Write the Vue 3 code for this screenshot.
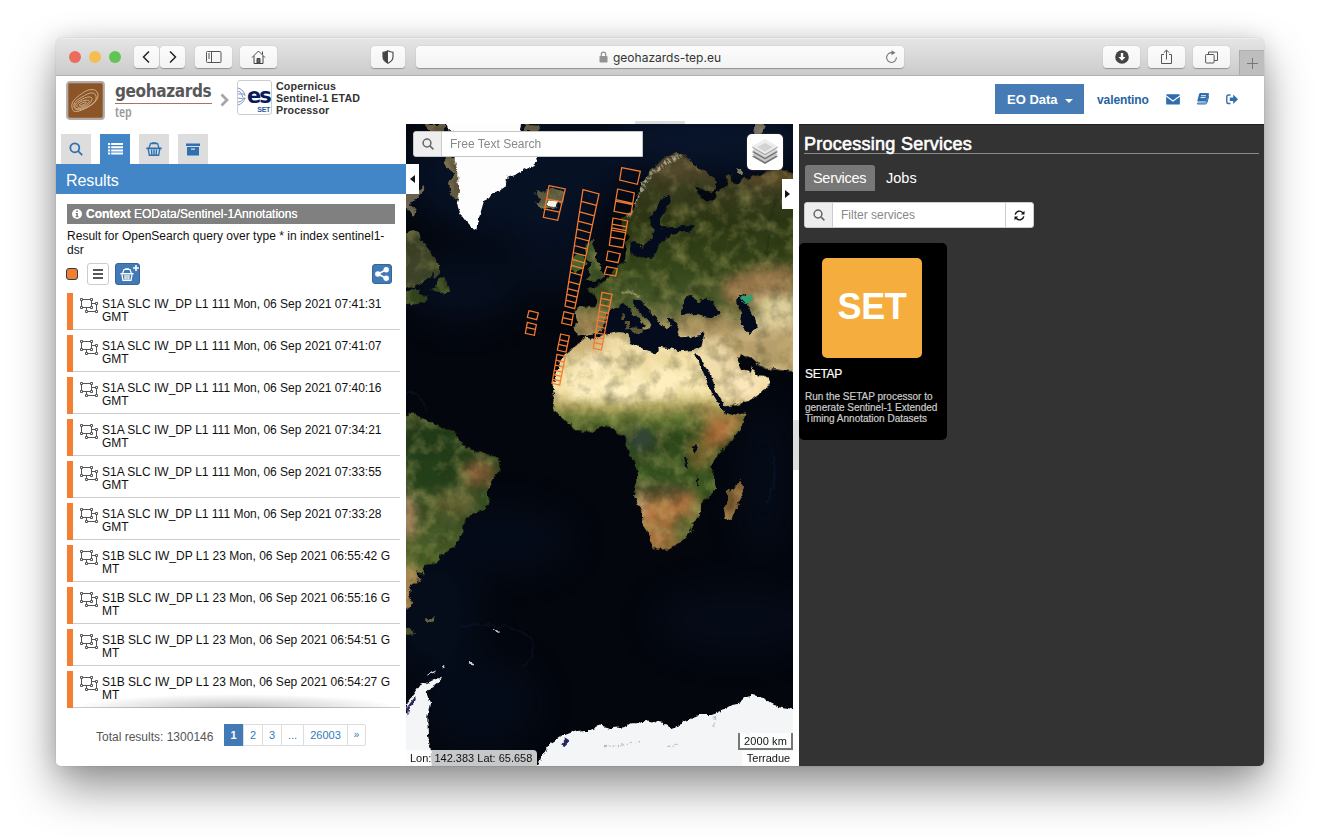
<script setup>
const results = [
  ['S1A', '111', '07:41:31', false],
  ['S1A', '111', '07:41:07', false],
  ['S1A', '111', '07:40:16', false],
  ['S1A', '111', '07:34:21', false],
  ['S1A', '111', '07:33:55', false],
  ['S1A', '111', '07:33:28', false],
  ['S1B', '23', '06:55:42', true],
  ['S1B', '23', '06:55:16', true],
  ['S1B', '23', '06:54:51', true],
  ['S1B', '23', '06:54:27', true],
].map(([sat, track, time, split]) => ({
  first: `${sat} SLC IW_DP L1 ${track} Mon, 06 Sep 2021 ${time}` + (split ? ' G' : ''),
  second: split ? 'MT' : 'GMT',
}))

const pages = ['1', '2', '3', '...', '26003', '»']

// Acquisition strips: top-left, top-right, bottom-left, bottom-right, then rung positions
const strips = [
  [435, 197, 484, 207, 418, 292, 461, 301, [0.42, 0.74]],
  [537, 209, 585, 222, 483, 558, 512, 566, [0.1, 0.19, 0.27, 0.34, 0.41, 0.48, 0.54, 0.6, 0.65, 0.71, 0.79, 0.85, 0.9, 0.95]],
  [480, 575, 508, 582, 473, 609, 502, 616, [0.52]],
  [470, 642, 496, 648, 460, 690, 486, 696, [0.35, 0.65]],
  [459, 703, 484, 709, 444, 790, 467, 795, [0.2, 0.37, 0.55, 0.7, 0.86]],
  [375, 572, 403, 579, 370, 592, 398, 599, []],
  [370, 607, 397, 614, 364, 640, 391, 646, [0.45]],
  [653, 143, 709, 154, 647, 180, 700, 193, []],
  [641, 207, 691, 219, 630, 274, 681, 284, [0.48, 0.54]],
  [627, 294, 671, 303, 616, 376, 657, 383, [0.22, 0.36, 0.44, 0.7]],
  [612, 393, 649, 402, 607, 421, 642, 428, []],
  [608, 440, 640, 446, 601, 462, 635, 468, []],
  [594, 517, 624, 523, 568, 685, 592, 690, [0.11, 0.22, 0.34, 0.43, 0.5, 0.61, 0.72, 0.8, 0.9]],
].map(([ax, ay, bx, by, cx, cy, dx, dy, rungs]) => {
  let d = `M${ax} ${ay}L${bx} ${by}L${dx} ${dy}L${cx} ${cy}Z`
  for (const t of rungs) {
    d += `M${ax + (cx - ax) * t} ${ay + (cy - ay) * t}L${bx + (dx - bx) * t} ${by + (dy - by) * t}`
  }
  return d
})
</script>

<template>
  <div class="desktop">
    <div class="window">
      <div class="toolbar">
        <div class="lights"><i class="red"></i><i class="yellow"></i><i class="green"></i></div>
        <div class="tb nav">
          <svg width="25" height="22" viewBox="0 0 25 22"><path d="M15 5.500L9.500 11l5.500 5.500" fill="none" stroke="#222" stroke-width="1.500" /></svg>
        </div>
        <div class="tb nav fwd">
          <svg width="25" height="22" viewBox="0 0 25 22"><path d="M10 5.500l5.500 5.500-5.500 5.500" fill="none" stroke="#222" stroke-width="1.500" /></svg>
        </div>
        <div class="tb side">
          <svg width="16" height="12" viewBox="0 0 16 12" fill="none" stroke="#555"><rect x=".5" y=".5" width="14.500" height="11" rx="1" /><path d="M5.500 .5v11M2 3h2M2 5h2M2 7h2" /></svg>
        </div>
        <div class="tb home">
          <svg width="15" height="14" viewBox="0 0 15 14" fill="none" stroke="#444"><path d="M1 7.500l6.500-6.500L14 7.500M3 6v7.500h9V6M11.500 4.500V1.500" /><path d="M6 13V8.500h3V13z" fill="#666" /></svg>
        </div>
        <div class="tb shield">
          <svg width="12" height="14" viewBox="0 0 12 14"><path d="M6 .7C4.500 1.800 2.500 2.100 1 2.200V7c0 3 2.500 5 5 6.300C8.500 12 11 10 11 7V2.200C9.500 2.100 7.500 1.800 6 .7z" fill="none" stroke="#444" stroke-width="1.100" /><path d="M6 .7C4.500 1.800 2.500 2.100 1 2.200V7c0 3 2.500 5 5 6.300z" fill="#444" /></svg>
        </div>
        <div class="url">
          <svg width="9" height="12" viewBox="0 0 9 12"><rect x=".5" y="5" width="8" height="6.500" rx=".8" fill="#939393" /><path d="M2.300 5.500V3.300a2.200 2.200 0 0 1 4.400 0v2.200" fill="none" stroke="#939393" stroke-width="1.200" /></svg>
          <span>geohazards-tep.eu</span>
          <svg class="reload" width="13" height="14" viewBox="0 0 13 14"><path d="M7 2.700A4.900 4.900 0 1 0 11.400 7.300" fill="none" stroke="#777" stroke-width="1.100" /><path d="M6.500 .2l4 2.600-4 2.400z" fill="#777" /></svg>
        </div>
        <div class="tb down">
          <svg width="14" height="14" viewBox="0 0 14 14"><circle cx="7" cy="7" r="6.800" fill="#444" /><path d="M5.800 3h2.400v4h2.300L7 10.800 3.500 7h2.300z" fill="#fff" /></svg>
        </div>
        <div class="tb share">
          <svg width="13" height="16" viewBox="0 0 13 16" fill="none" stroke="#555"><path d="M4 5.500H1.500v9h10v-9H9M6.500 10.500V1.200M3.800 3.700l2.700-2.700 2.700 2.700" /></svg>
        </div>
        <div class="tb tabs">
          <svg width="13" height="13" viewBox="0 0 13 13" fill="none" stroke="#555"><rect x=".6" y="3.500" width="8.500" height="8.500" rx=".8" /><path d="M3.500 3.500v-2.500h9v8.500H9.300" /></svg>
        </div>
        <div class="plus">
          <svg width="11" height="11" viewBox="0 0 11 11"><path d="M5.500 0v11M0 5.500h11" stroke="#777" /></svg>
        </div>
      </div>

      <header class="header">
        <svg class="logo" width="39" height="39" viewBox="0 0 39 39">
          <rect x="1.200" y="1.200" width="36.600" height="36.600" rx="2.500" fill="#8b5527" stroke="#b3aca6" stroke-width="2.200" />
          <g fill="none" stroke="#d6b896" stroke-width=".8" transform="rotate(-12 19 20)">
            <path d="M5 23c0-6 8-9 15-12 9-3 14 1 13 6s-8 9-18 11-10-1-10-5z" />
            <path d="M7 23c0-5 8-7 13-8.500 8-3 12 0 10.500 5S22 26 16 27 7 27 7 23z" />
            <path d="M8 23.500c0-3.500 6-5.500 11-6.500 6-1 8.500 1 7 3.500S21 25 16 26s-8 0-8-2.500z" />
            <path d="M10 23.300c0-2 4-4.200 8-4s6 1 5 2.200-4 3-8 3.300-5 0-5-1.500z" />
            <path d="M12.500 22.800c1-1.500 6-2.500 7.500-1.300-1 2-7 2.700-7.500 1.300z" />
          </g>
        </svg>
        <div class="brand"><div class="brand-name">geohazards</div><div class="brand-sub">tep</div></div>
        <svg class="crumb" width="9" height="14" viewBox="0 0 9 14"><path d="M1.500 1.500L7 7l-5.500 5.500" fill="none" stroke="#a5a5a5" stroke-width="2.700" /></svg>
        <div class="esa">
          <svg width="8" height="21" viewBox="0 0 8 21" fill="none" stroke="#7c95c6"><path d="M0 2c4 1 6.500 4 7 8M0 5c3 1 4 3 4.500 6M0 8h7M0 12c3 1 5 0 7.500 0M0 19c3-1 6-3 7-7M0 16c3 0 5-2 6-4" /></svg>
          <div class="esa-text"><b>es</b><em>SET</em></div>
        </div>
        <div class="app-name">Copernicus<br />Sentinel-1 ETAD<br />Processor</div>
        <div class="grow"></div>
        <div class="eo">EO Data<i></i></div>
        <div class="user">valentino</div>
        <svg class="mail" width="14" height="11" viewBox="0 0 15 12" fill="#2f6ead"><path d="M0 1.300Q0 .3 1 .3h13q1 0 1 1L7.500 6.800z" /><path d="M0 3l7.500 5.500L15 3v7.500q0 1-1 1H1q-1 0-1-1z" /></svg>
        <svg class="book" width="13" height="12" viewBox="0 0 13 12"><path d="M4 .3h7.800q1 0 .7 1L10.200 9q-.3 1-1.300 1H2q-1 .2-.6 1h8q1 0 1.400-1l2-7" fill="none" stroke="#2f6ead" stroke-width="1" /><path d="M4 .3h7.800q1 0 .7 1L10 8.500H1.200L3 1.300q.2-1 1-1z" fill="#2f6ead" /><path d="M5 2.700h5M4.500 4.600h5" stroke="#fff" stroke-width=".9" /></svg>
        <svg class="exit" width="12" height="11" viewBox="0 0 12 11"><path d="M4.500 1H2.300Q.8 1 .8 2.500v5.500q0 1.500 1.500 1.500h2.200" fill="none" stroke="#2f6ead" stroke-width="1.400" /><path d="M3.800 3.600h3.400V.6L12 5.300 7.200 10V7H3.800z" fill="#2f6ead" /></svg>
      </header>

      <main class="main">
        <section class="left">
          <div class="left-tabs">
            <div class="lt"><svg width="14" height="14" viewBox="0 0 14 14" fill="none" stroke="#2f70b1" stroke-width="1.800"><circle cx="5.800" cy="5.800" r="4.500" /><path d="M9.200 9.200l4 4" /></svg></div>
            <div class="lt on"><svg width="15" height="12" viewBox="0 0 15 12" fill="#fff"><path d="M0 0h2.200v2H0zM3.200 0H15v2H3.200zM0 3.200h2.200v2H0zM3.200 3.200H15v2H3.200zM0 6.400h2.200v2H0zM3.200 6.400H15v2H3.200zM0 9.600h2.200v2H0zM3.200 9.600H15v2H3.200z" /></svg></div>
            <div class="lt"><svg width="16" height="15" viewBox="0 0 16 15"><path d="M3 6L4.500 1.500h7L13 6" fill="none" stroke="#2f70b1" stroke-width="1.300" /><path d="M6 .2h4v1.800H6zM.3 5.500h15.400v1.800H.3z" fill="#2f70b1" /><path d="M2.200 7l1.200 6.300h9.200L13.800 7M5.500 7.500l.3 5M8 7.500v5M10.500 7.500l-.3 5" fill="none" stroke="#2f70b1" stroke-width="1.400" /></svg></div>
            <div class="lt"><svg width="14" height="13" viewBox="0 0 14 13" fill="#2f70b1"><path d="M0 .5h14v2.500H0zM1 4h12v8.500H1z" /><path d="M5 5.500h4v1.200H5z" fill="#ddd" /></svg></div>
          </div>
          <div class="results-bar">Results</div>
          <div class="left-body">
            <div class="context">
              <svg width="10" height="10" viewBox="0 0 10 10"><circle cx="5" cy="5" r="5" fill="#fff" /><path d="M4.200 1.600h1.600v1.400H4.200zM3.600 4h2.200v3.200h.7v1H3.500v-1h.8V5h-.7z" fill="#777" /></svg>
              <span><b>Context</b> EOData/Sentinel-1Annotations</span>
            </div>
            <p class="desc">Result for OpenSearch query over type * in index sentinel1-<br />dsr</p>
            <div class="tools">
              <i class="swatch"></i>
              <div class="menu"><svg width="10" height="10" viewBox="0 0 10 10"><path d="M0 1h10M0 5h10M0 9h10" stroke="#222" stroke-width="1.500" /></svg></div>
              <div class="basket"><svg width="24" height="20" viewBox="0 0 24 20"><path d="M6.500 9.500L8 5.500h6l1.500 4" fill="none" stroke="#fff" stroke-width="1.200" /><path d="M9 4.300h4v1.500H9zM4.500 9h13v1.600h-13z" fill="#fff" /><path d="M6 10.500l1 5.800h8l1-5.800M9 11l.2 4.500M11 11v4.500M13 11l-.2 4.500" fill="none" stroke="#fff" stroke-width="1.300" /><path d="M20 1v6M17 4h6" stroke="#fff" stroke-width="1.600" /></svg></div>
              <div class="grow"></div>
              <div class="share-btn"><svg width="14" height="14" viewBox="0 0 14 14"><path d="M11.500 2.500L3 7l8.500 4.500" fill="none" stroke="#fff" stroke-width="1.600" /><g fill="#fff"><circle cx="11.200" cy="2.700" r="2.700" /><circle cx="2.900" cy="7" r="2.800" /><circle cx="11.200" cy="11.300" r="2.700" /></g></svg></div>
            </div>
            <ul class="list">
              <li v-for="r in results" :key="r.first">
                <svg width="19" height="15" viewBox="0 0 19 15" fill="none" stroke="#555" stroke-width="1">
                  <path d="M2.500 1.500h8.500M1.500 2.500v6M11.500 2.500v6M2.500 9.500h8M12 5.500h4M16.500 6v6M7.500 13.500h8M6.500 10v2" />
                  <path d="M.5 .5h2v2h-2zM10.500 .5h2v2h-2zM.5 8.500h2v2h-2zM10.500 8.500h2v2h-2zM15.500 4.500h2v2h-2zM5.500 12.500h2v2h-2zM15.500 12.500h2v2h-2z" fill="#fff" />
                </svg>
                <div>{{ r.first }}<br />{{ r.second }}</div>
              </li>
            </ul>
            <div class="pager">
              <span class="total">Total results: 1300146</span>
              <div class="pages"><span v-for="(p, i) in pages" :key="p" :class="['p' + i, { cur: i === 0 }]">{{ p }}</span></div>
            </div>
          </div>
        </section>

        <section class="map">
          <svg class="earth" width="387" height="642" viewBox="6 12 1161 1926" preserveAspectRatio="none">
            <defs>
              <filter id="rough" x="0" y="0" width="1180" height="1940" filterUnits="userSpaceOnUse" color-interpolation-filters="sRGB">
                <feTurbulence type="fractalNoise" baseFrequency=".045" numOctaves="4" seed="7" result="n" />
                <feDisplacementMap in="SourceGraphic" in2="n" scale="20" xChannelSelector="R" yChannelSelector="G" result="d" />
                <feTurbulence type="fractalNoise" baseFrequency=".02" numOctaves="6" seed="12" result="t" />
                <feColorMatrix in="t" type="matrix" values="0 0 0 0 .16  0 0 0 0 .17  0 0 0 0 .06  .9 0 0 0 -.42" result="dark" />
                <feComposite in="dark" in2="d" operator="in" result="dd" />
                <feColorMatrix in="t" type="matrix" values="0 0 0 0 .8  0 0 0 0 .75  0 0 0 0 .45  0 .9 0 0 -.4" result="light" />
                <feComposite in="light" in2="d" operator="in" result="ll" />
                <feMerge><feMergeNode in="d" /><feMergeNode in="dd" /><feMergeNode in="ll" /></feMerge>
              </filter>
              <filter id="edge" x="0" y="0" width="1180" height="1940" filterUnits="userSpaceOnUse" color-interpolation-filters="sRGB">
                <feTurbulence type="fractalNoise" baseFrequency=".045" numOctaves="4" seed="7" />
                <feDisplacementMap in="SourceGraphic" scale="18" xChannelSelector="R" yChannelSelector="G" />
              </filter>
              <filter id="soft" x="-30%" y="-30%" width="160%" height="160%" color-interpolation-filters="sRGB"><feGaussianBlur stdDeviation="18" /></filter>
              <filter id="soft2" x="-30%" y="-30%" width="160%" height="160%" color-interpolation-filters="sRGB"><feGaussianBlur stdDeviation="50" /></filter>
              <linearGradient id="afro" x1="0" y1="130" x2="0" y2="1300" gradientUnits="userSpaceOnUse">
                <stop offset="0" stop-color="#4b4128" /><stop offset=".06" stop-color="#3b3d20" />
                <stop offset=".15" stop-color="#2b3613" /><stop offset=".27" stop-color="#35471a" />
                <stop offset=".36" stop-color="#47582a" /><stop offset=".425" stop-color="#a49260" />
                <stop offset=".45" stop-color="#f1deaa" /><stop offset=".585" stop-color="#fbe8b0" />
                <stop offset=".625" stop-color="#a9a05a" /><stop offset=".66" stop-color="#5c702f" />
                <stop offset=".7" stop-color="#2c461b" /><stop offset=".85" stop-color="#3b5a22" />
                <stop offset=".9" stop-color="#77703c" /><stop offset="1" stop-color="#94703c" />
              </linearGradient>
              <linearGradient id="sam" x1="0" y1="880" x2="0" y2="1460" gradientUnits="userSpaceOnUse">
                <stop offset="0" stop-color="#4c5a2b" /><stop offset=".1" stop-color="#213b18" /><stop offset=".35" stop-color="#24401a" />
                <stop offset=".6" stop-color="#435727" /><stop offset=".8" stop-color="#4d6428" /><stop offset=".87" stop-color="#8b7645" /><stop offset="1" stop-color="#a9874b" />
              </linearGradient>
              <clipPath id="land">
                <path d="M522 645L508 625 520 600 511 572 530 560 570 562 582 545 572 525 550 510 575 500 600 485 612 475 640 435 662 430 665 400 665 370 676 350 663 335 650 300 668 285 690 270 700 220 715 190 750 140 785 110 820 100 845 110 880 140 915 160 940 185 932 212 900 212 872 200 890 230 910 245 930 235 940 215 965 200 968 165 982 160 985 185 1000 190 1020 175 1060 165 1100 150 1130 148 1180 165 1180 755 1140 750 1080 745 1060 730 1040 712 1015 705 1002 712 1010 740 1030 755 1040 762 1045 742 1062 766 1095 770 1097 788 1085 808 1045 835 1010 850 965 866 962 884 985 880 1025 875 1020 900 1000 945 960 985 930 1020 925 1040 932 1080 936 1105 920 1125 892 1150 887 1190 865 1210 865 1230 835 1265 800 1285 762 1290 745 1280 735 1240 720 1215 715 1175 690 1125 700 1080 695 1030 665 980 665 945 640 940 630 922 590 925 560 935 525 935 500 920 470 890 447 870 452 840 444 815 452 785 460 745 480 705 500 690 512 675 545 655 538 645Z" />
              </clipPath>
              <clipPath id="samClip"><path d="M0 885L30 883 70 900 120 925 150 930 165 960 175 975 210 995 250 1000 285 1015 290 1040 275 1070 255 1095 255 1130 245 1165 200 1185 175 1215 175 1240 150 1280 130 1295 105 1300 110 1315 100 1330 60 1335 55 1360 35 1355 50 1375 20 1395 15 1420 25 1440 10 1465 0 1470Z" /></clipPath>
            </defs>
            <rect width="1180" height="1950" fill="#03060d" />
            <g filter="url(#soft2)" fill="#08142a">
              <ellipse cx="330" cy="160" rx="330" ry="190" opacity=".8" /><ellipse cx="170" cy="500" rx="180" ry="100" opacity=".6" />
              <ellipse cx="900" cy="60" rx="330" ry="110" /><ellipse cx="80" cy="1480" rx="150" ry="170" opacity=".5" />
              <ellipse cx="450" cy="400" rx="130" ry="120" opacity=".6" /><ellipse cx="1080" cy="1080" rx="70" ry="230" opacity=".4" />
              <ellipse cx="300" cy="1260" rx="200" ry="100" opacity=".4" /><ellipse cx="220" cy="1750" rx="180" ry="140" opacity=".4" /><ellipse cx="1000" cy="1500" rx="250" ry="100" opacity=".35" />
            </g>
            <g filter="url(#rough)">
              <g clip-path="url(#land)">
                <rect x="420" y="80" width="780" height="1230" fill="url(#afro)" />
                <g filter="url(#soft)">
                  <path d="M1180 440L1070 440 970 470 945 520 985 560 1180 560z" fill="#96744a" />
                  <path d="M1180 520L1060 525 1045 640 1180 680z" fill="#dfcf9d" />
                  <path d="M890 640L1010 650 1180 620V770L980 720z" fill="#b79d6b" />
                  <path d="M880 660L960 660 1010 750 1090 780 970 860 920 770z" fill="#f0dbac" />
                  <path d="M820 595L970 590 1010 640 900 640 830 645z" fill="#a58b5c" />
                  <path d="M505 565L590 580 600 640 520 650z" fill="#9b8250" />
                  <path d="M490 660L600 650 600 690 480 720z" fill="#c9ad75" />
                  <ellipse cx="820" cy="150" rx="90" ry="25" fill="#554a2d" />
                  <ellipse cx="1100" cy="170" rx="90" ry="25" fill="#5d4b29" />
                  <path d="M910 915L1020 870 1000 930 930 1000 890 960z" fill="#b56e3b" />
                  <path d="M910 850L960 890 930 920 880 880z" fill="#a88349" />
                  <path d="M690 1085L720 1140 780 1130 880 1110 860 1200 790 1270 745 1290 715 1190z" fill="#b07440" />
                  <ellipse cx="705" cy="1150" rx="18" ry="55" fill="#dfb27f" />
                  <ellipse cx="850" cy="1230" rx="40" ry="45" fill="#55652c" />
                  <ellipse cx="710" cy="960" rx="40" ry="35" fill="#34463a" />
                  <ellipse cx="890" cy="1000" rx="40" ry="50" fill="#77662f" />
                  <ellipse cx="760" cy="1110" rx="100" ry="20" fill="#4a472b" />
                  <ellipse cx="630" cy="800" rx="150" ry="40" fill="#fff1c4" />
                  <ellipse cx="560" cy="730" rx="60" ry="25" fill="#fff0c4" />
                  <ellipse cx="780" cy="780" rx="80" ry="40" fill="#ffefc0" />
                  <ellipse cx="1020" cy="800" rx="60" ry="40" fill="#fbe5ba" />
                </g>
                <path d="M690 245Q730 150 830 105M670 290Q685 270 695 235" fill="none" stroke="#d8d5c8" stroke-width="13" stroke-dasharray="5 6 11 5" opacity=".65" />
                <path d="M650 520Q690 508 705 530" fill="none" stroke="#c9c5a0" stroke-width="7" opacity=".5" />
                <path d="M1167 200Q1100 230 1100 300T1080 430" fill="none" stroke="#253016" stroke-width="7" opacity=".7" />
              </g>
              <path d="M545 372L568 362 565 385 580 400 577 425 592 450 604 465 590 482 545 482 560 465 550 450 560 435 548 415z" fill="#405627" />
              <path d="M505 415L520 400 540 405 545 425 535 450 510 460 500 445z" fill="#3e5c26" />
              <path d="M385 212L400 225 397 208 412 217 430 218 440 205 465 210 478 220 475 240 455 262 430 268 405 258 395 250 410 240z" fill="#5f5a40" />
              <path d="M0 342L25 330 40 335 50 360 75 385 90 410 100 430 110 455 95 470 85 460 80 470 60 485 35 500 0 505z" fill="#3d4328" />
              <path d="M100 480L118 470 122 485 135 495 138 515 125 522 110 515 95 515 85 510 95 495zM0 520L30 505 50 510 40 525 60 530 75 525 70 540 45 550 25 558 15 550 0 555z" fill="#31451d" />
              <path d="M0 200L25 195 40 215 55 195 60 210 35 240 15 250 38 275 30 290 12 265 0 265z" fill="#696250" />
              <path d="M120 105L150 112 165 150 168 235 150 235 140 215 135 190 147 160 125 135zM370 12L410 14 405 36 355 36zM60 12h60v25H80zM340 115h40v20h-40z" fill="#62573f" />
              <path d="M1055 0L1085 15 1065 60 1050 50zM1003 145l12 5-4 14-12-5z" fill="#767262" />
              <g clip-path="url(#samClip)">
                <rect y="870" width="320" height="620" fill="url(#sam)" />
                <g filter="url(#soft)"><ellipse cx="225" cy="1060" rx="50" ry="40" fill="#805a36" /><ellipse cx="150" cy="1150" rx="70" ry="40" fill="#626333" /><ellipse cx="12" cy="1190" rx="20" ry="75" fill="#c79472" /><ellipse cx="10" cy="1400" rx="30" ry="75" fill="#bd955c" /></g>
              </g>
              <path d="M1010 1080L1017 1100 1010 1130 995 1170 985 1200 965 1197 960 1170 970 1145 968 1115 990 1105z" fill="#876237" />
              <path d="M0 1520L15 1525 30 1538 0 1545zM68 1492h28l-8 10h-22z" fill="#4a502c" />
            </g>
            <g fill="#040b1c" filter="url(#edge)">
              <path d="M535 650L560 645 578 642 595 630 602 600 615 570 640 563 660 552 672 562 685 580 708 598 722 617 715 632 735 630 742 610 725 592 703 575 690 552 692 538 712 545 735 573 755 590 768 608 785 625 800 620 790 598 812 595 824 610 818 635 830 655 860 652 880 648 902 640 892 680 868 690 830 694 800 685 765 680 758 700 720 688 680 668 675 640 640 636 600 645 560 660z" />
              <path d="M842 535L865 525 872 545 885 550 890 535 915 538 938 565 945 582 920 592 880 582 828 585 830 565z" />
              <path d="M1000 535L1025 522 1035 535 1025 550 1040 575 1055 600 1058 628 1035 640 1010 615 1015 580 1000 550z" />
              <path d="M802 230L795 222 770 240 758 268 738 285 740 310 752 330 745 350 730 370 716 380 700 370 690 360 676 368 682 395 690 408 720 418 748 412 766 380 773 363 795 353 804 341 855 334 870 320 860 314 810 323 785 327 765 316 765 300 780 270 798 252z" />
              <path d="M872 702L885 705 902 735 920 762 935 812 964 862 985 862 970 888 955 872 925 825 900 762z" />
              <path d="M863 980l14-4 6 14-12 8zM840 1010l6 30 8 8-8-38zM878 1060l8 35-6 0z" />
            </g>
            <path d="M1008 535q15-15 38-8l2 12-22 14z" fill="#31a06c" filter="url(#edge)" />
            <path d="M690 622l-15 3 15 14 22 0 3-14zM655 580l8 0 0 20-8-2zM665 606l10 0 0 22-8 0z" fill="#5a5633" filter="url(#edge)" />
            <g filter="url(#edge)">
              <path d="M105 0H355L345 40H390L398 122 385 135 360 150 330 165 312 172 300 200 280 215 265 220 255 235 240 242 232 270 225 290 220 330 200 320 190 310 175 290 165 270 158 250 163 235 168 215 160 190 160 150 152 120 150 40z" fill="#fdfdfd" />
              <path d="M432 246l20-6 14 4-12 14-22-2z" fill="#f2f2ee" />
              <path d="M0 1790L12 1745 30 1722 50 1695 75 1685 100 1672 115 1672 95 1692 70 1708 68 1722 78 1745 70 1790 72 1850 80 1890 84 1950H0zM395 1950L415 1905 440 1870 470 1850 500 1838 540 1830 560 1830 585 1815 620 1825 660 1822 680 1810 710 1810 725 1800 760 1808 790 1815 800 1828 820 1820 840 1805 890 1785 920 1785 960 1770 985 1755 1010 1750 1020 1730 1045 1725 1080 1735 1110 1755 1180 1772V1950z" fill="#f4f5f7" />
              <path d="M8 1790l-2-25 24-30 6 4-20 25zM470 1872l14-16 12 8-15 14z" fill="#10104f" opacity=".9" />
              <path d="M600 1880l50-4 60-12M790 1880l40-10M930 1790l6 20-12 15M1030 1840l40 20" stroke="#b4bcc6" stroke-width="4" fill="none" stroke-dasharray="9 7 4 5" />
              <path d="M268 1527l18 8M195 1628l16 3M70 1665l28-12M118 1640l8-4" stroke="#c8ced4" stroke-width="5" />
            </g>
            <g fill="none" stroke="#0d1c33" stroke-width="6" opacity=".45" filter="url(#edge)">
              <path d="M170 1520Q300 1500 380 1550 400 1620 350 1640M10 815Q60 820 66 880M1110 1010Q1120 1080 1090 1150" />
            </g>
            <path v-for="(d, i) in strips" :key="i" :d="d" fill="none" stroke="#f47b30" stroke-width="3.800" />
          </svg>

          <div class="map-search">
            <span class="mag"><svg width="12" height="12" viewBox="0 0 12 12" fill="none" stroke="#666" stroke-width="1.500"><circle cx="5" cy="5" r="3.900" /><path d="M7.900 7.900l3.500 3.500" /></svg></span>
            <span class="ph">Free Text Search</span>
          </div>
          <div class="layers">
            <svg width="28" height="28" viewBox="0 0 28 28">
              <path d="M1 18.500L14 11l13 7.500L14 26z" fill="#777" /><path d="M1 16.500L14 9l13 7.500L14 24z" fill="#c9c9c9" />
              <path d="M1 14L14 6.500 27 14 14 21.500z" fill="#777" /><path d="M1 12.200L14 4.700l13 7.500L14 19.700z" fill="#d6d6d6" />
              <path d="M1 9.500L14 2l13 7.500L14 17z" fill="#999" /><path d="M1 8.500L14 1l13 7.500L14 16z" fill="#ececec" /><path d="M6.500 9L14 5l7.500 4L14 14z" fill="#d3d3d3" />
            </svg>
          </div>
          <div class="toggle tl"><svg width="5" height="8" viewBox="0 0 5 8"><path d="M5 0v8L0 4z" fill="#111" /></svg></div>
          <div class="toggle tr"><svg width="5" height="8" viewBox="0 0 5 8"><path d="M0 0v8l5-4z" fill="#111" /></svg></div>
          <div class="lonlat">Lon: 142.383 Lat: 65.658</div>
          <div class="scale">2000 km</div>
          <div class="attr">Terradue</div>
          <div class="grip-top"></div>
        </section>

        <div class="split"><i></i></div>

        <section class="right">
          <h2>Processing Services</h2>
          <div class="rtabs"><span class="on">Services</span><span>Jobs</span></div>
          <div class="filter">
            <span class="mag"><svg width="12" height="12" viewBox="0 0 12 12" fill="none" stroke="#666" stroke-width="1.500"><circle cx="5" cy="5" r="3.900" /><path d="M7.900 7.900l3.500 3.500" /></svg></span>
            <span class="ph">Filter services</span>
            <span class="refresh"><svg width="11" height="11" viewBox="0 0 11 11"><path d="M1.200 4.600A4.300 4.300 0 0 1 8.700 2.700M9.800 6.400A4.300 4.300 0 0 1 2.300 8.300" fill="none" stroke="#111" stroke-width="1.400" /><path d="M10.500.8v3.700H6.800zM.5 10.200V6.500h3.700z" fill="#111" /></svg></span>
          </div>
          <div class="card">
            <div class="tile">SET</div>
            <div class="card-title">SETAP</div>
            <p>Run the SETAP processor to<br />generate Sentinel-1 Extended<br />Timing Annotation Datasets</p>
          </div>
        </section>
      </main>
    </div>
  </div>
</template>

<style>
body { background: #fff; }
</style>

<style scoped>
.desktop { height: 840px; box-sizing: border-box; padding: 38px 56px 0; overflow: hidden; background: #fff; font-family: "Liberation Sans", Arial, sans-serif; color: #111; white-space: nowrap; }
.desktop * { box-sizing: border-box; }
.window { width: 1208px; height: 728px; border-radius: 6px 6px 5px 5px; overflow: hidden; background: #fff; box-shadow: 0 0 1px rgba(0,0,0,.4), 0 22px 46px rgba(0,0,0,.42), 0 0 22px rgba(0,0,0,.12); display: flex; flex-direction: column; }
.grow { flex: 1; }
svg { display: block; flex: none; }

.toolbar { height: 38px; flex: none; display: flex; align-items: center; background: linear-gradient(#e5e5e5, #cbcbcb); border-bottom: 1px solid #b0b0b0; border-top: 1px solid #eee; padding-left: 13px; }
.lights { display: flex; gap: 8px; width: 65px; }
.lights i { width: 12px; height: 12px; border-radius: 50%; }
.red { background: #ed6a5e; } .yellow { background: #f5bf4f; } .green { background: #61c554; }
.tb { height: 22px; border-radius: 4px; background: linear-gradient(#fcfcfc, #f3f3f3); box-shadow: 0 .5px 1px rgba(0,0,0,.3); display: flex; align-items: center; justify-content: center; flex: none; width: 37px; }
.tb.nav { width: 25px; }
.fwd { margin-left: 1px; }
.side { margin-left: 10px; }
.home { margin-left: 8px; }
.tb.shield { width: 34px; margin-left: 94px; }
.url { width: 488px; height: 22px; margin-left: 11px; border-radius: 4px; background: linear-gradient(#fcfcfc, #f3f3f3); box-shadow: 0 .5px 1px rgba(0,0,0,.3); display: flex; align-items: center; font: 12px Inter, sans-serif; letter-spacing: 0; color: #333; padding: 0 6px 0 183px; }
.url span { margin-left: 5px; flex: 1; }
.down { margin-left: 199px; }
.share { margin-left: 8px; }
.tabs { margin-left: 8px; }
.plus { margin-left: auto; width: 25px; height: 25px; align-self: flex-end; background: #bebebe; border-left: 1px solid #aaa; border-top: 1px solid #b2b2b2; display: flex; align-items: center; justify-content: center; }

.header { height: 48px; flex: none; display: flex; align-items: flex-start; background: #fff; }
.logo { margin: 5px 0 0 10px; }
.brand { width: 97px; margin: 3px 0 0 10px; font-family: "DejaVu Sans Condensed", "DejaVu Sans", sans-serif; font-weight: bold; font-stretch: condensed; color: #58585a; }
.brand-name { font-size: 17px; line-height: 24px; height: 25px; border-bottom: 1px solid #a9745c; letter-spacing: -.35px; }
.brand-sub { font-size: 14px; line-height: 14px; color: #999; margin-top: 1px; font-family: "Open Sans", sans-serif; font-weight: 600; }
.crumb { margin: 17px 0 0 8px; }
.esa { width: 35px; height: 35px; margin: 4px 0 0 8px; border: 1px solid #ccc; border-radius: 3px; display: flex; }
.esa svg { margin-top: 5px; }
.esa-text { width: 25px; display: flex; flex-direction: column; }
.esa b { height: 24px; font: bold 21px/31px "DejaVu Sans", sans-serif; letter-spacing: -2px; color: #071a5c; padding-left: 1px; }
.esa em { align-self: flex-end; font: bold 7px/9px "Liberation Sans", sans-serif; letter-spacing: -.3px; color: #2b55a0; margin-right: 1px; }
.app-name { margin: 4px 0 0 4px; font-weight: bold; font-size: 10.700px; line-height: 12px; color: #333; letter-spacing: .12px; }
.eo { width: 89px; height: 30px; margin-top: 8px; background: #467bb5; color: #fff; font-weight: bold; font-size: 13px; line-height: 30px; padding: 1px 0 0 12px; display: flex; align-items: center; }
.eo i { border: 4px solid transparent; border-top-color: #fff; border-bottom: 0; margin: 2px 0 0 7px; }
.user { margin: 16px 0 0 13px; width: 52px; font-weight: bold; font-size: 12px; line-height: 16px; color: #2763a3; letter-spacing: -.1px; }
.mail { margin: 18px 0 0 17px; }
.book { margin: 17px 0 0 16px; }
.exit { margin: 18px 26px 0 17px; }

.main { height: 642px; display: grid; grid-template-columns: 350px 387px 6px 465px; }
.left { background: #fff; min-width: 0; }
.left-tabs { display: flex; gap: 9px; height: 40px; padding: 10px 0 0 5px; }
.lt { width: 30px; height: 30px; background: #ddd; display: flex; align-items: center; justify-content: center; }
.lt.on { background: #4286c7; }
.results-bar { height: 30px; background: #4286c7; color: #fff; font-size: 16px; line-height: 33px; padding-left: 10px; letter-spacing: -.1px; }
.left-body { padding: 10px 6px 0 11px; }
.context { height: 20px; width: 328px; background: #808080; color: #fff; display: flex; align-items: center; gap: 4px; padding-left: 5px; font-size: 12px; text-shadow: 0 0 .5px #fff; }
.desc { margin: 5px 0 0; font-size: 12px; line-height: 14px; letter-spacing: .02px; }
.tools { display: flex; align-items: center; height: 22px; margin-top: 6px; padding-right: 8px; }
.swatch { width: 12px; height: 12px; border: 1px solid #31394a; border-radius: 3px; background: #f08030; margin-left: -1px; }
.menu { width: 22px; height: 22px; margin-left: 9px; border: 1px solid #ccc; border-radius: 3px; display: flex; align-items: center; justify-content: center; }
.basket { width: 25px; height: 22px; margin-left: 6px; border: 1px solid #33669b; border-radius: 3px; background: #427ab5; }
.share-btn { width: 20px; height: 20px; border: 1px solid #33669b; border-radius: 3px; background: #427ab5; display: flex; align-items: center; justify-content: center; }
.list { list-style: none; margin: 8px 0 0; padding: 0; height: 415px; position: relative; }
.list::after { content: ""; position: absolute; left: 6px; right: 0; bottom: 0; height: 14px; background: radial-gradient(ellipse 50% 100% at 50% 100%, rgba(0,0,0,.24), rgba(0,0,0,0)); }
.list li { height: 37px; margin-bottom: 5px; border-left: 6px solid #f47e31; position: relative; display: flex; padding: 5px 0 0 7px; font-size: 12px; line-height: 13px; }
.list li::after { content: ""; position: absolute; left: 0; right: 0; bottom: 0; height: 1px; background: #ccc; }
.list li svg { margin-right: 3px; }
.pager { display: flex; align-items: center; margin-top: 16px; height: 24px; padding-left: 29px; }
.total { font-size: 12px; color: #555; width: 128px; padding-top: 2px; }
.pages { display: flex; height: 22px; border: 1px solid #ddd; border-radius: 2px; font-size: 11px; color: #337ab7; width: 142px; margin-bottom: 2px; }
.pages span { flex: 0 0 19px; border-right: 1px solid #ddd; text-align: center; line-height: 20px; }
.pages .p3 { flex-basis: 22px; }
.pages .p4 { flex-basis: 44px; }
.pages .p5 { flex: 1; border: 0; font-size: 10px; }
.pages .cur { background: #427ab5; color: #fff; margin: -1px 0 -1px -1px; line-height: 22px; flex-basis: 20px; font-weight: bold; }

.map { position: relative; background: #03060f; min-width: 0; }
.map-search { position: absolute; left: 7px; top: 7px; width: 230px; height: 26px; background: #fff; border: 1px solid #c6c6c6; border-radius: 3px 0 0 3px; display: flex; }
.mag { width: 28px; background: #eee; border-right: 1px solid #ccc; display: flex; align-items: center; justify-content: center; border-radius: 3px 0 0 3px; }
.ph { font-size: 12px; line-height: 25px; color: #888; padding-left: 8px; }
.layers { position: absolute; left: 341px; top: 9.500px; width: 36px; height: 36px; border-radius: 5px; background: #fff; display: flex; align-items: center; justify-content: center; box-shadow: 0 0 2px #444; }
.toggle { position: absolute; background: #fff; height: 30px; display: flex; align-items: center; justify-content: center; }
.tl { left: 0; top: 40px; width: 13px; }
.tr { right: 0; top: 55px; width: 11px; }
.lonlat { position: absolute; left: 0; bottom: 0; height: 16px; width: 131px; background: rgba(255,255,255,.78); border-radius: 0 4px 0 0; font-size: 11px; line-height: 16px; padding-left: 4px; }
.scale { position: absolute; right: 0; bottom: 16px; width: 55px; height: 17px; border: 2px solid #777; border-top: 0; background: rgba(255,255,255,.75); font-size: 11px; line-height: 17px; text-align: center; letter-spacing: .1px; }
.attr { position: absolute; right: 0; bottom: 0; width: 51px; height: 15px; background: rgba(255,255,255,.8); font-size: 11px; line-height: 15px; text-align: center; padding-left: 2px; }
.grip-top { position: absolute; left: 229px; top: -3px; width: 50px; height: 3px; background: #ddd; }
.split { background: #fff; padding-top: 296px; }
.split i { display: block; height: 50px; background: #ddd; }

.right { background: #333; min-width: 0; color: #fff; border-top: 1px solid #222; }
h2 { margin: 7px 5px 0; height: 22px; border-bottom: 1px solid #8a8a8a; font-size: 18px; line-height: 25px; font-weight: normal; letter-spacing: .26px; -webkit-text-stroke: .6px #fff; }
.rtabs { display: flex; margin: 11px 0 0 6px; font-size: 14.500px; line-height: 26px; }
.rtabs span { padding: 0 11px; }
.rtabs .on { width: 70px; padding: 0 0 0 8px; background: #777; border-radius: 3px 3px 0 0; letter-spacing: -.3px; }
.filter { margin: 11px 0 0 5px; width: 230px; height: 26px; background: #fff; border: 1px solid #ccc; border-radius: 3px; display: flex; }
.refresh { margin-left: auto; width: 28px; border-left: 1px solid #ccc; display: flex; align-items: center; justify-content: center; }
.card { margin-top: 15px; width: 148px; height: 197px; background: #000; border-radius: 5px; padding: 15px 6px 0; }
.tile { width: 100px; height: 100px; margin-left: 17px; border-radius: 5px; background: #f5ae3d; font-weight: bold; font-size: 36px; letter-spacing: -.3px; line-height: 97px; text-align: center; }
.card-title { font-size: 12px; line-height: 14px; margin-top: 9px; letter-spacing: -.3px; -webkit-text-stroke: .2px #fff; }
.card p { margin: 10px 0 0; font-size: 10px; line-height: 11px; color: #ccc; -webkit-text-stroke: .2px #ccc; }
</style>
